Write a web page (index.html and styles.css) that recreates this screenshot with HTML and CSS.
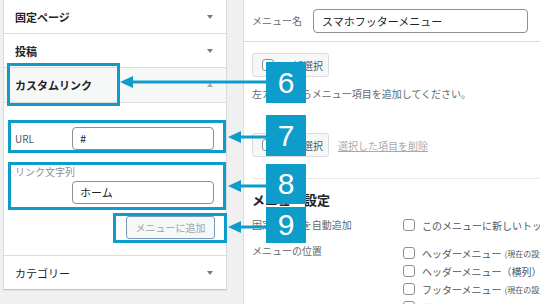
FILE: index.html
```html
<!DOCTYPE html>
<html lang="ja">
<head>
<meta charset="utf-8">
<title>メニュー</title>
<link rel="stylesheet" href="styles.css">
</head>
<body>
<div class="page">
  <aside class="left">
    <div class="acc-row"><span class="acc-title">固定ページ</span><i class="tri down"></i></div>
    <div class="acc-row"><span class="acc-title">投稿</span><i class="tri down"></i></div>
    <div class="acc-row active"><span class="acc-title">カスタムリンク</span><i class="tri up"></i></div>
    <div class="acc-body">
      <div class="field-inline">
        <span class="field-label dark">URL</span>
        <div class="text-input">#</div>
      </div>
      <div class="field-block">
        <span class="field-label light">リンク文字列</span>
        <div class="text-input indent">ホーム</div>
      </div>
      <div class="btn-row"><span class="add-btn">メニューに追加</span></div>
    </div>
    <div class="acc-row last"><span class="acc-title normal">カテゴリー</span><i class="tri down"></i></div>
  </aside>

  <main class="right">
    <div class="name-row">
      <span class="name-label">メニュー名</span>
      <div class="name-input">スマホフッターメニュー</div>
    </div>
    <div class="right-body">
      <div class="bulk-btn first"><span class="cb"></span>一括選択</div>
      <p class="hint">左カラムからメニュー項目を追加してください。</p>
      <div class="bulk-row">
        <div class="bulk-btn"><span class="cb"></span>一括選択</div>
        <span class="del-link">選択した項目を削除</span>
      </div>
      <section class="settings">
        <h3 class="settings-title">メニュー設定</h3>
        <div class="set-grid">
          <span class="set-label">固定ページを自動追加</span>
          <div class="opts">
            <div class="opt"><span class="cb"></span>このメニューに新しいトップレベルページを自動的に追加</div>
          </div>
          <span class="set-label">メニューの位置</span>
          <div class="opts">
            <div class="opt"><span class="cb"></span>ヘッダーメニュー <small>(現在の設定: グローバルメニュー)</small></div>
            <div class="opt"><span class="cb"></span>ヘッダーメニュー（横列）</div>
            <div class="opt"><span class="cb"></span>フッターメニュー <small>(現在の設定: フッターメニュー)</small></div>
            <div class="opt"><span class="cb"></span>サイドバー</div>
          </div>
        </div>
      </section>
    </div>
  </main>

  <svg class="marks" width="540" height="304" viewBox="0 0 540 304">
    <g fill="none" stroke="#0e9ccb" stroke-width="3">
      <rect x="8.5" y="64.5" width="110" height="40"/>
      <rect x="9.5" y="121.5" width="215" height="30"/>
      <rect x="9.5" y="163.5" width="215" height="45"/>
      <rect x="114.5" y="214.5" width="111" height="27"/>
      <line x1="130" y1="82" x2="268" y2="82"/>
      <line x1="236" y1="137" x2="268" y2="137"/>
      <line x1="236" y1="186" x2="268" y2="186"/>
      <line x1="236" y1="227" x2="268" y2="227"/>
    </g>
    <g fill="#0e9ccb">
      <polygon points="120,82 133,76 133,88"/>
      <polygon points="228,137 241,131 241,143"/>
      <polygon points="228,186 241,180 241,192"/>
      <polygon points="228,227 241,221 241,233"/>
    </g>
  </svg>
  <div class="badge b6">6</div>
  <div class="badge b7">7</div>
  <div class="badge b8">8</div>
  <div class="badge b9">9</div>
</div>
</body>
</html>
```
FILE: styles.css
```css
* { box-sizing: border-box; }
html, body { margin: 0; padding: 0; }
body {
  width: 540px;
  height: 304px;
  overflow: hidden;
  font-family: "Noto Sans CJK JP", "Noto Sans", sans-serif;
  color: #1d2327;
  background: #f0f0f1;
}
.page {
  position: relative;
  display: flex;
  align-items: flex-start;
  height: 304px;
  padding-left: 3px;
  background: #f0f0f1;
}

/* left accordion */
.left {
  width: 224px;
  flex: none;
  background: #fff;
  border-left: 1px solid #dcdcde;
  border-right: 1px solid #dcdcde;
  border-bottom: 1px solid #c3c4c7;
  box-shadow: 0 1px 1px rgba(0,0,0,.05);
}
.acc-row {
  height: 34px;
  display: flex;
  align-items: center;
  justify-content: space-between;
  padding: 0 13px 0 11px;
  border-bottom: 1px solid #dcdcde;
}
.acc-row.active { height: 35px; background: #f6f7f7; }
.acc-row.last { border-bottom: none; height: 33px; }
.acc-title { font-size: 11px; font-weight: 700; line-height: 14px; }
.acc-title.normal { font-weight: 400; }
.tri {
  display: block;
  width: 0; height: 0;
  border-left: 3px solid transparent;
  border-right: 3px solid transparent;
}
.tri.down { border-top: 4px solid #787c82; }
.tri.up { border-bottom: 4px solid #a7aaad; }

.acc-body {
  height: 153px;
  padding: 24px 12px 0 11px;
  border-bottom: 1px solid #dcdcde;
}
.field-inline { display: flex; align-items: center; }
.field-label { font-size: 10px; line-height: 12px; }
.field-label.dark { width: 57px; color: #50575e; }
.field-label.light { display: block; color: #8c8f94; }
.text-input {
  width: 142px;
  height: 23px;
  border: 1px solid #8c8f94;
  border-radius: 4px;
  padding: 0 7px;
  font-size: 11px;
  line-height: 21px;
  color: #1d2327;
}
.text-input.indent { margin: 3px 0 0 57px; }
.field-block { margin-top: 16px; }
.btn-row { display: flex; justify-content: flex-end; margin: 12px -1px 0 0; }
.add-btn {
  width: 89px;
  height: 23px;
  border: 1px solid #7b98b5;
  border-radius: 3px;
  background: #f6f7f7;
  color: #9ea3a8;
  font-size: 10px;
  line-height: 21px;
  text-align: center;
}

/* right panel */
.right {
  flex: 1;
  height: 304px;
  margin-left: 16px;
  background: #fff;
  border-left: 1px solid #dcdcde;
  overflow: hidden;
  white-space: nowrap;
}
.name-row {
  height: 42px;
  display: flex;
  align-items: center;
  padding-left: 8px;
  border-bottom: 1px solid #dcdcde;
}
.name-label { width: 61px; font-size: 10px; color: #646970; }
.name-input {
  width: 215px;
  height: 24px;
  border: 1px solid #8c8f94;
  border-radius: 4px;
  padding: 0 8px;
  font-size: 11px;
  line-height: 22px;
}
.right-body { padding-left: 8px; }
.bulk-btn {
  width: 77px;
  height: 24px;
  display: flex;
  align-items: center;
  padding-left: 9px;
  border: 1px solid #dcdcde;
  border-radius: 3px;
  background: #f6f7f7;
  font-size: 10px;
  color: #50575e;
}
.bulk-btn.first { margin-top: 11px; }
.bulk-btn .cb { margin-right: 9px; }
.hint {
  margin: 11px 0 0;
  font-size: 10px;
  line-height: 12px;
  color: #646970;
}
.bulk-row { display: flex; align-items: center; gap: 9px; margin-top: 33px; }
.del-link { font-size: 10px; color: #a7aaad; text-decoration: underline; }
.cb {
  display: inline-block;
  flex: none;
  width: 12px;
  height: 12px;
  border: 1px solid #8c8f94;
  border-radius: 3px;
  background: #fff;
}
.settings { margin-top: 21px; border-top: 1px solid #e8e8e9; padding-top: 13px; }
.settings-title {
  margin: 0;
  font-size: 13px;
  line-height: 16px;
  font-weight: 600;
}
.set-grid {
  display: grid;
  grid-template-columns: 151px 1fr;
  row-gap: 14px;
  margin-top: 11px;
}
.set-label { font-size: 10px; line-height: 12px; color: #646970; }
.opts { display: flex; flex-direction: column; gap: 6px; }
.opt {
  display: flex;
  align-items: center;
  height: 12px;
  font-size: 10px;
  color: #50575e;
}
.opt .cb { margin-right: 7px; }
.opt small { font-size: 8px; margin-left: 3px; }
.set-grid .opts:last-child { margin-top: 2px; }

/* annotations */
.marks { position: absolute; left: 0; top: 0; pointer-events: none; }
.badge {
  position: absolute;
  left: 266px;
  width: 40px;
  display: flex;
  align-items: center;
  justify-content: center;
  background: #0e9ccb;
  color: #fff;
  font-family: "Liberation Sans", Arial, sans-serif;
  font-size: 30px;
}
.b6 { top: 62px; height: 41px; }
.b7 { top: 115px; height: 41px; }
.b8 { top: 164px; height: 40px; }
.b9 { top: 207px; height: 36px; }
```
